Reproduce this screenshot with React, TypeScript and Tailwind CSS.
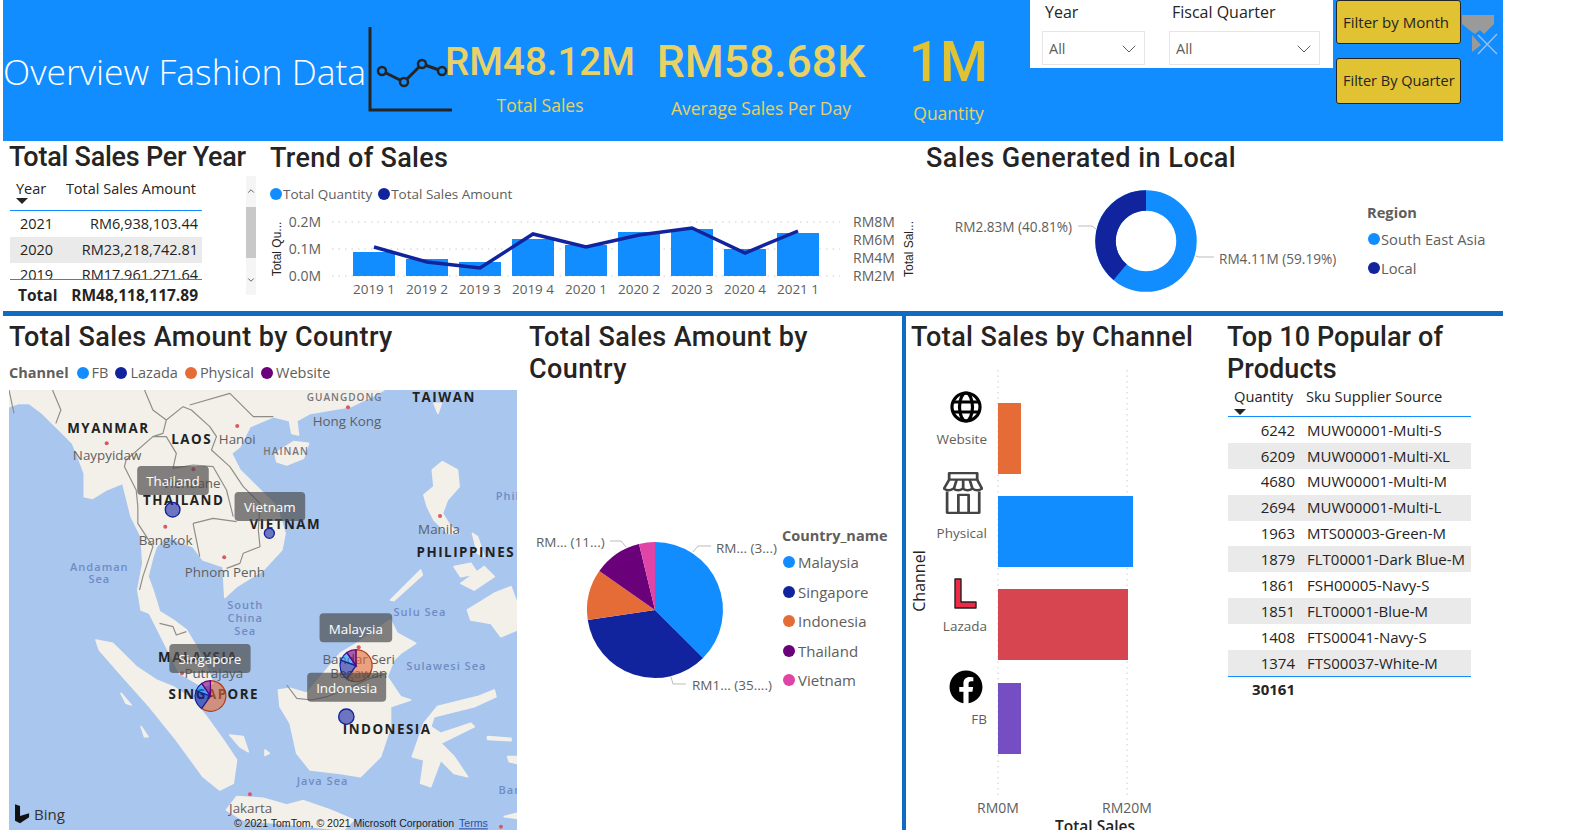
import { ChevronDown, ChevronUp } from 'lucide-react';
import { FaFacebook } from 'react-icons/fa';

const BLUE = '#118DFF';
const NAVY = '#12239E';
const ORANGE = '#E66C37';
const PURPLE = '#6B007B';
const PINK = '#E044A7';

const trendBars = [252, 259, 262, 239, 245, 232, 229, 249, 233];
const trendLine = [247, 262, 268, 234, 247, 235, 228, 253, 231];
const trendLabels = ['2019 1', '2019 2', '2019 3', '2019 4', '2020 1', '2020 2', '2020 3', '2020 4', '2021 1'];

const yearRows = [
  { year: '2021', amount: 'RM6,938,103.44' },
  { year: '2020', amount: 'RM23,218,742.81' },
  { year: '2019', amount: 'RM17,961,271.64' },
];

const productRows = [
  { qty: 6242, sku: 'MUW00001-Multi-S' },
  { qty: 6209, sku: 'MUW00001-Multi-XL' },
  { qty: 4680, sku: 'MUW00001-Multi-M' },
  { qty: 2694, sku: 'MUW00001-Multi-L' },
  { qty: 1963, sku: 'MTS00003-Green-M' },
  { qty: 1879, sku: 'FLT00001-Dark Blue-M' },
  { qty: 1861, sku: 'FSH00005-Navy-S' },
  { qty: 1851, sku: 'FLT00001-Blue-M' },
  { qty: 1408, sku: 'FTS00041-Navy-S' },
  { qty: 1374, sku: 'FTS00037-White-M' },
];

const countryLegend = [
  { name: 'Malaysia', color: BLUE },
  { name: 'Singapore', color: NAVY },
  { name: 'Indonesia', color: ORANGE },
  { name: 'Thailand', color: PURPLE },
  { name: 'Vietnam', color: PINK },
];

// map shapes are traced in 3x crop coordinates, the svg viewBox scales them back down
const land = [
  '0,0 1120,0 1100,12 1020,50 900,70 860,92 865,135 845,130 838,92 790,80 720,110 690,170 665,190 690,240 740,290 800,350 825,430 815,480 760,540 680,590 645,622 640,530 580,510 550,470 470,440 440,470 430,500 415,560 430,600 450,665 490,690 530,720 560,770 590,830 610,880 580,890 510,850 480,790 450,730 420,670 395,660 385,600 400,520 395,440 365,380 350,320 340,280 290,300 250,325 225,320 225,250 210,210 190,160 150,120 130,100 100,70 60,40 30,40 0,50',
  '260,750 310,760 380,830 440,870 490,890 550,930 590,980 640,1050 680,1110 670,1180 630,1200 580,1160 500,1050 420,950 340,860 270,780',
  '680,1220 760,1225 830,1245 880,1232 960,1260 1030,1290 1000,1320 700,1290 650,1260',
  '805,900 840,895 890,910 940,850 990,790 1040,760 1110,710 1140,690 1160,730 1215,760 1170,790 1150,810 1130,860 1170,920 1200,930 1140,950 1140,1010 1110,1100 1050,1160 990,1150 900,1140 860,1090 840,1000 810,950',
  '1205,1100 1240,1000 1280,950 1400,920 1450,900 1455,920 1390,950 1270,980 1260,1010 1290,1030 1380,1000 1390,1010 1290,1060 1330,1100 1370,1160 1330,1150 1290,1110 1260,1190 1230,1180 1240,1110',
  '1265,240 1295,215 1340,240 1345,290 1310,330 1295,370 1320,410 1345,430 1310,430 1270,390 1250,350 1240,315 1270,290',
  '1370,660 1450,610 1500,590 1518,640 1518,720 1470,740 1440,700 1380,690',
  '1330,530 1380,520 1400,550 1350,560',
  '1350,580 1420,530 1450,560 1390,600',
  '1385,430 1400,440 1420,500 1400,490',
  '1140,630 1230,540 1235,555 1150,632',
  '795,190 850,155 895,160 880,205 830,225 800,215',
  '1270,40 1292,40 1282,70',
  '660,1035 700,1040 715,1085 690,1070',
  '765,1080 778,1090 765,1096',
  '335,910 365,945 350,940',
  '395,1010 415,1040 405,1040',
  '1430,1040 1500,1045 1500,1052 1430,1048',
  '1490,1100 1518,1100 1518,1120 1495,1115',
  '1480,1280 1518,1270 1518,1285',
];

const borders = [
  '0,0 15,70',
  '130,0 155,60 140,100',
  '405,0 430,60 470,90 460,130 430,140 350,210 345,230 380,300 385,350 385,400 430,470 400,560 390,600',
  '470,90 520,50 545,60 600,110 620,140 605,180 660,230 700,290 750,340 745,420 750,470 700,490 690,520 650,535',
  '540,45 660,10 730,80 790,80',
  '430,140 470,140 500,190 490,235 550,225 610,230 650,300 670,380',
  '550,400 610,385 680,395',
  '550,400 570,500',
  '450,700 490,710 500,735 530,725',
  '830,885 860,925 905,930 950,920 1000,900 1080,865 1130,850',
];

const mapText = [
  { t: 'TAIWAN', x: 1300, y: 22, k: 'c' },
  { t: 'MYANMAR', x: 297, y: 115, k: 'c' },
  { t: 'LAOS', x: 546, y: 150, k: 'c' },
  { t: 'THAILAND', x: 522, y: 333, k: 'c' },
  { t: 'VIETNAM', x: 826, y: 403, k: 'c' },
  { t: 'PHILIPPINES', x: 1365, y: 487, k: 'c' },
  { t: 'MALAYSIA', x: 565, y: 803, k: 'c' },
  { t: 'SINGAPORE', x: 612, y: 915, k: 'c' },
  { t: 'INDONESIA', x: 1130, y: 1020, k: 'c' },
  { t: 'GUANGDONG', x: 1003, y: 20, k: 'r' },
  { t: 'HAINAN', x: 828, y: 182, k: 'r' },
  { t: 'Hong Kong', x: 1010, y: 95, k: 'p' },
  { t: 'Hanoi', x: 682, y: 150, k: 'p' },
  { t: 'Naypyidaw', x: 293, y: 197, k: 'p' },
  { t: 'Vientiane', x: 545, y: 282, k: 'p' },
  { t: 'Bangkok', x: 468, y: 453, k: 'p' },
  { t: 'Phnom Penh', x: 645, y: 547, k: 'p' },
  { t: 'Manila', x: 1285, y: 418, k: 'p' },
  { t: 'Bandar Seri', x: 1045, y: 810, k: 'p' },
  { t: 'Begawan', x: 1045, y: 852, k: 'p' },
  { t: 'Putrajaya', x: 612, y: 850, k: 'p' },
  { t: 'Jakarta', x: 722, y: 1255, k: 'p' },
  { t: 'Andaman', x: 270, y: 530, k: 's' },
  { t: 'Sea', x: 270, y: 567, k: 's' },
  { t: 'South', x: 706, y: 645, k: 's' },
  { t: 'China', x: 706, y: 683, k: 's' },
  { t: 'Sea', x: 706, y: 722, k: 's' },
  { t: 'Sulu Sea', x: 1228, y: 665, k: 's' },
  { t: 'Sulawesi Sea', x: 1307, y: 828, k: 's' },
  { t: 'Java Sea', x: 937, y: 1172, k: 's' },
  { t: 'Phil', x: 1490, y: 318, k: 's' },
  { t: 'Bar', x: 1495, y: 1200, k: 's' },
];

const cityDots = [
  [1013, 52], [682, 108], [292, 160], [551, 238], [467, 410], [643, 502],
  [1288, 378], [1045, 772], [517, 850], [720, 1213], [1470, 1310],
];

const tips = [
  { t: 'Singapore', x: 479, y: 762, w: 243 },
  { t: 'Thailand', x: 383, y: 228, w: 214 },
  { t: 'Vietnam', x: 674, y: 306, w: 211 },
  { t: 'Malaysia', x: 928, y: 670, w: 217 },
  { t: 'Indonesia', x: 891, y: 848, w: 236 },
];

// pie slice between two clockwise angles measured from 12 o'clock
function slice(cx: number, cy: number, r: number, from: number, to: number) {
  const a = ((from - 90) * Math.PI) / 180;
  const b = ((to - 90) * Math.PI) / 180;
  const large = to - from > 180 ? 1 : 0;
  return `M${cx} ${cy}L${cx + r * Math.cos(a)} ${cy + r * Math.sin(a)}A${r} ${r} 0 ${large} 1 ${cx + r * Math.cos(b)} ${cy + r * Math.sin(b)}Z`;
}

function Dot({ color }: { color: string }) {
  return <span className="h-3 w-3 shrink-0 rounded-full" style={{ backgroundColor: color }} />;
}

function Title({ children, className = '' }: { children: React.ReactNode; className?: string }) {
  return (
    <h2 className={`font-['Roboto',sans-serif] text-[27px] leading-8 font-medium text-[#252423] ${className}`}>
      {children}
    </h2>
  );
}

function SortArrow() {
  return <span className="block h-0 w-0 border-x-[6px] border-t-[6px] border-x-transparent border-t-[#252423]" />;
}

function Slicer({ label, className }: { label: string; className: string }) {
  return (
    <div className={className}>
      <div className="h-[31px] pl-[3px] text-[16px] text-[#252423]">{label}</div>
      <div className="flex h-[34px] items-center justify-between border border-[#e6e6e6] pt-[2px] pl-[6px] pr-[3px] text-[14.5px] text-[#605E5C]">
        All
        <ChevronDown className="h-[24px] w-[24px] text-[#605E5C]" strokeWidth={1} />
      </div>
    </div>
  );
}

function Kpi({ value, label, className, valueClass, labelClass }: { value: string; label: string; className: string; valueClass: string; labelClass: string }) {
  return (
    <div className={`flex flex-col items-center ${className}`}>
      <div className={`font-['Roboto',sans-serif] font-medium whitespace-nowrap ${valueClass}`}>{value}</div>
      <div className={`text-[17.5px] whitespace-nowrap text-[#E8D166] ${labelClass}`}>{label}</div>
    </div>
  );
}

function Header() {
  return (
    <header className="flex h-[141px] w-[1500px] items-start bg-[#118DFF]">
      <div className="mt-[48px] w-[362px] text-[35.5px] leading-[46px] font-light whitespace-nowrap text-white">Overview Fashion Data</div>
      <svg viewBox="365 20 90 100" className="h-[100px] w-[90px] shrink-0 translate-y-[20px] overflow-visible" fill="none" stroke="#252423">
        <path d="M370 27V110H452" strokeWidth="3" />
        <path d="M382 71L404 82L422 64L442 71" strokeWidth="3" />
        <circle cx="382" cy="71" r="4" strokeWidth="2.5" fill={BLUE} />
        <circle cx="404" cy="82" r="4" strokeWidth="2.5" fill={BLUE} />
        <circle cx="422" cy="64" r="4" strokeWidth="2.5" fill={BLUE} />
        <circle cx="442" cy="71" r="4" strokeWidth="2.5" fill={BLUE} />
      </svg>
      <Kpi value="RM48.12M" label="Total Sales" className="ml-[-10px] mt-[38px] w-[190px]" valueClass="text-[38.5px] leading-[48px] text-[#E8D166]" labelClass="mt-[6px]" />
      <Kpi value="RM58.68K" label="Average Sales Per Day" className="ml-[20px] mt-[36px] w-[212px]" valueClass="text-[44.5px] leading-[52px] text-[#E8D166]" labelClass="mt-[7px]" />
      <Kpi value="1M" label="Quantity" className="ml-[44px] mt-[30px] w-[75px]" valueClass="text-[55px] leading-[64px] text-[#E0C232]" labelClass="mt-[6px]" />
      <div className="ml-[44px] flex h-[68px] w-[303px] gap-[24px] bg-white pl-[12px]">
        <Slicer label="Year" className="w-[103px]" />
        <Slicer label="Fiscal Quarter" className="w-[151px]" />
      </div>
      <div className="ml-[3px] flex w-[125px] flex-col gap-[14px]">
        <button className="h-[44px] rounded-[3px] border border-[#252423] bg-[#E0C232] pl-[6px] text-left text-[15px] text-[#252423]">Filter by Month</button>
        <button className="h-[46px] rounded-[3px] border border-[#252423] bg-[#E0C232] pl-[6px] text-left text-[14.5px] whitespace-nowrap text-[#252423]">Filter By Quarter</button>
      </div>
      <svg viewBox="0 0 38 41" className="ml-[1px] h-[41px] w-[38px] shrink-0 translate-y-[15px]" fill="none">
        <path d="M0 0H32V9L22 19L18 15L13 19L10 17L0 9Z" fill="#9a9a9a" />
        <path d="M10 20L19 30L10 37Z" fill="#9a9a9a" />
        <path d="M16 20L35 39M35 19L16 39" stroke="#9dbfe6" strokeWidth="1.4" />
      </svg>
    </header>
  );
}

function YearTable() {
  return (
    <section className="flex h-full w-[262px] shrink-0 flex-col pl-[6px]">
      <Title className="-mt-[1px] h-[36px] pt-[1px] tracking-[-0.25px] whitespace-nowrap">Total Sales Per Year</Title>
      <div className="flex">
        <div className="mt-[3px] w-[193px] shrink-0 pl-[1px] text-[14.5px] leading-[20px] text-[#252423]">
          <div className="relative flex h-[32px] justify-between border-b border-[#118DFF] px-[6px]">
            <span>Year</span>
            <span>Total Sales Amount</span>
            <span className="absolute top-[19px] left-[6px]"><SortArrow /></span>
          </div>
          <div className="flex h-[26px] items-center justify-between pr-[4px] pl-[10px]">
            <span>{yearRows[0].year}</span><span>{yearRows[0].amount}</span>
          </div>
          <div className="flex h-[26px] items-center justify-between bg-[#EAEAEA] pr-[4px] pl-[10px]">
            <span>{yearRows[1].year}</span><span>{yearRows[1].amount}</span>
          </div>
          <div className="flex h-[17px] items-start justify-between overflow-hidden border-b border-[#118DFF] pt-[2px] pr-[4px] pl-[10px]">
            <span>{yearRows[2].year}</span><span>{yearRows[2].amount}</span>
          </div>
          <div className="flex h-[30px] items-center justify-between pr-[4px] pl-[8px] text-[15.5px] font-bold">
            <span>Total</span>
            <span>RM48,118,117.89</span>
          </div>
        </div>
        <div className="relative ml-[44px] h-[119px] w-[10px] bg-[#f5f5f5]">
          <div className="mt-[31px] h-[51px] bg-[#c8c8c8]" />
          <ChevronUp className="absolute top-[10px] left-0 h-[10px] w-[10px] text-[#444]" />
          <ChevronDown className="absolute bottom-[10px] left-0 h-[10px] w-[10px] text-[#444]" />
        </div>
      </div>
    </section>
  );
}

function TrendChart() {
  return (
    <section className="h-full w-[650px] shrink-0 pl-[5px]">
      <Title className="-mt-[1px] h-[36px] pt-[2px] tracking-[0.3px]">Trend of Sales</Title>
      <div className="mt-[11px] flex h-[14px] items-center gap-[1px] text-[13.5px] whitespace-nowrap text-[#605E5C]">
        <Dot color={BLUE} /><span className="mr-[5px]">Total Quantity</span>
        <Dot color={NAVY} /><span>Total Sales Amount</span>
      </div>
      <svg viewBox="265 205 650 100" className="mt-[4px] -ml-[5px] h-[100px] w-[650px]">
        {[222, 249, 276].map((y) => (
          <line key={y} x1="332" x2="840" y1={y} y2={y} stroke="#ccc" strokeDasharray="1.5 5" />
        ))}
        {trendBars.map((top, i) => (
          <rect key={i} x={353 + i * 53} y={top} width="42" height={276 - top} fill={BLUE} />
        ))}
        <polyline points={trendLine.map((y, i) => `${374 + i * 53},${y}`).join(' ')} fill="none" stroke={NAVY} strokeWidth="3.5" />
        {['0.2M', '0.1M', '0.0M'].map((t, i) => (
          <text key={t} x="321" y={227 + i * 27} textAnchor="end" className="fill-[#605E5C] text-[14px]">{t}</text>
        ))}
        {['RM8M', 'RM6M', 'RM4M', 'RM2M'].map((t, i) => (
          <text key={t} x="853" y={227 + i * 18} className="fill-[#605E5C] text-[14px]">{t}</text>
        ))}
        {trendLabels.map((t, i) => (
          <text key={t} x={374 + i * 53} y="294" textAnchor="middle" className="fill-[#605E5C] text-[13.5px]">{t}</text>
        ))}
        <text transform="translate(281 249) rotate(-90)" textAnchor="middle" className="fill-[#252423] font-['Liberation_Sans',sans-serif] text-[12px]">Total Qu...</text>
        <text transform="translate(913 249) rotate(-90)" textAnchor="middle" className="fill-[#252423] font-['Liberation_Sans',sans-serif] text-[12px]">Total Sal...</text>
      </svg>
    </section>
  );
}

function LocalDonut() {
  const cx = 1146;
  const cy = 240;
  return (
    <section className="flex h-full flex-1">
      <div className="w-[450px] shrink-0">
        <Title className="-mt-[1px] h-[36px] pl-[11px] pt-[2px] tracking-[0.5px]">Sales Generated in Local</Title>
        <svg viewBox="915 177 450 133" className="mt-[2px] h-[133px] w-[450px]">
          <circle cx={cx} cy={cy} r="40.5" fill="none" stroke={BLUE} strokeWidth="20.5" />
          <path d={`M${cx} ${cy - 40.5}A40.5 40.5 0 0 0 ${cx - 25.9} ${cy + 31.1}`} fill="none" stroke={NAVY} strokeWidth="20.5" />
          <path d="M1078 225H1092L1096 228" fill="none" stroke="#bbb" />
          <path d="M1196 255L1198 256H1214" fill="none" stroke="#bbb" />
          <text x="1072" y="231" textAnchor="end" className="fill-[#605E5C] text-[13.6px]">RM2.83M (40.81%)</text>
          <text x="1219" y="263" className="fill-[#605E5C] text-[13.6px]">RM4.11M (59.19%)</text>
        </svg>
      </div>
      <div className="pl-[2px] pt-[60px] text-[14.7px] text-[#605E5C]">
        <div className="font-bold">Region</div>
        <div className="mt-[5px] flex items-center gap-[1px] pl-[1px] whitespace-nowrap"><Dot color={BLUE} />South East Asia</div>
        <div className="mt-[7px] flex items-center gap-[1px] pl-[1px]"><Dot color={NAVY} />Local</div>
      </div>
    </section>
  );
}

function MapBubble({ cx, cy, r }: { cx: number; cy: number; r: number }) {
  return <circle cx={cx} cy={cy} r={r} fill="#12239E" fillOpacity="0.6" stroke="#12239E" strokeWidth="4" />;
}

function MapPie({ cx, cy, r }: { cx: number; cy: number; r: number }) {
  return (
    <g strokeWidth="3.5">
      <path d={slice(cx, cy, r, 0, 215)} fill={ORANGE} fillOpacity="0.6" stroke="#b5390c" />
      <path d={slice(cx, cy, r, 215, 290)} fill={NAVY} fillOpacity="0.6" stroke={NAVY} />
      <path d={slice(cx, cy, r, 290, 325)} fill={BLUE} fillOpacity="0.6" stroke={NAVY} />
      <path d={slice(cx, cy, r, 325, 360)} fill={PURPLE} fillOpacity="0.6" stroke={PURPLE} />
    </g>
  );
}

function SalesMap() {
  return (
    <svg viewBox="0 0 1518 1320" preserveAspectRatio="none" className="mt-[7px] ml-[6px] h-[440px] w-[508px] bg-[#A9C6EF]">
      <g className="blur-[0.4px]">
        {land.map((points) => <polygon key={points} points={points} fill="#F3F0EA" stroke="#F3F0EA" strokeWidth="5" strokeLinejoin="round" />)}
        {borders.map((points) => <polyline key={points} points={points} fill="none" stroke="#8f8d88" strokeWidth="3.5" strokeLinejoin="round" />)}
      </g>
      {cityDots.map(([x, y]) => <circle key={`${x}-${y}`} cx={x} cy={y} r="6" fill="#d9595f" />)}
      {mapText.map((m) => (
        <text
          key={`${m.t}-${m.x}`}
          x={m.x}
          y={m.y + 13}
          textAnchor="middle"
          className={
            m.k === 'c' ? 'fill-[#222] text-[40px] font-bold tracking-[4.5px]'
              : m.k === 'r' ? 'fill-[#77767a] text-[30px] font-semibold tracking-[3px]'
                : m.k === 's' ? 'fill-[#6f8cc4] text-[33px] font-semibold tracking-[3px]'
                  : 'fill-[#5f5f5f] text-[40px]'
          }
        >
          {m.t}
        </text>
      ))}
      <MapBubble cx={489} cy={359} r={22} />
      <MapBubble cx={778} cy={430} r={15} />
      <MapBubble cx={1008} cy={980} r={23} />
      <MapPie cx={602} cy={918} r={46} />
      <MapPie cx={1037} cy={827} r={48} />
      {tips.map((tip) => (
        <g key={tip.t}>
          <rect x={tip.x} y={tip.y} width={tip.w} height="87" rx="12" fill="#4a4a4a" fillOpacity="0.68" />
          <text x={tip.x + tip.w / 2} y={tip.y + 61} textAnchor="middle" className="fill-white text-[40px]">{tip.t}</text>
        </g>
      ))}
      <path d="M18 1243L33 1248V1278L60 1270V1282L33 1300L18 1292Z" fill="#111" />
      <text x="75" y="1290" className="fill-[#333] text-[45px]">Bing</text>
      <text x="672" y="1312" className="fill-[#222] font-['Liberation_Sans',sans-serif] text-[31.5px]">© 2021 TomTom, © 2021 Microsoft Corporation</text>
      <text x="1345" y="1312" className="fill-[#2b4fa8] font-['Liberation_Sans',sans-serif] text-[31.5px]" textDecoration="underline">Terms</text>
    </svg>
  );
}

function CountryPie() {
  const cx = 655;
  const cy = 610;
  const r = 68;
  const stops = [0, 135, 261.5, 305, 346.4, 360];
  return (
    <section className="h-full w-[382px] shrink-0">
      <Title className="w-[340px] pl-[9px] pt-[5px] tracking-[0.4px]">Total Sales Amount by Country</Title>
      <div className="mt-[5px] flex">
        <svg viewBox="520 390 262 440" className="h-[440px] w-[262px] shrink-0">
          {countryLegend.map((c, i) => (
            <path key={c.name} d={slice(cx, cy, r, stops[i], stops[i + 1])} fill={c.color} />
          ))}
          <path d="M610 541H621L626 547" fill="none" stroke="#bbb" />
          <path d="M693 552L698 546H711" fill="none" stroke="#bbb" />
          <path d="M671 677L673 684H686" fill="none" stroke="#bbb" />
          <text x="536" y="547" className="fill-[#605E5C] text-[13.5px]">RM... (11...)</text>
          <text x="716" y="553" className="fill-[#605E5C] text-[13.5px]">RM... (3...)</text>
          <text x="692" y="690" className="fill-[#605E5C] text-[13.5px]">RM1... (35....)</text>
        </svg>
        <div className="pt-[136px] text-[15px] leading-[20px] text-[#605E5C]">
          <div className="text-[14.5px] font-bold whitespace-nowrap">Country_name</div>
          <div className="mt-[6px] flex flex-col gap-[9.6px]">
            {countryLegend.map((c) => (
              <div key={c.name} className="flex items-center gap-[3px] pl-[1px]"><Dot color={c.color} />{c.name}</div>
            ))}
          </div>
        </div>
      </div>
    </section>
  );
}

function ChannelIcon({ label, icon, className, iconClass, labelClass }: { label: string; icon: React.ReactNode; className: string; iconClass: string; labelClass: string }) {
  return (
    <div className={`flex flex-col ${className}`}>
      <div className={`flex w-[50px] items-center justify-center ${iconClass}`}>{icon}</div>
      <div className={`-ml-[20px] w-[66px] text-right text-[13.5px] leading-[18px] text-[#605E5C] ${labelClass}`}>{label}</div>
    </div>
  );
}

function ChannelChart() {
  const bars = [
    { y: 403, to: 1021, color: ORANGE },
    { y: 496, to: 1133, color: BLUE },
    { y: 589, to: 1128, color: '#D64550' },
    { y: 683, to: 1021, color: '#744EC2' },
  ];
  return (
    <section className="h-full w-[322px] shrink-0 overflow-hidden">
      <Title className="pl-[5px] pt-[5px] tracking-[0.4px] whitespace-nowrap">Total Sales by Channel</Title>
      <div className="relative flex h-[477px]">
        <div className="flex w-[26px] items-center justify-center pb-[22px]">
          <span className="-rotate-90 text-[16px] font-medium whitespace-nowrap text-[#252423]">Channel</span>
        </div>
        <div className="ml-[9px] flex flex-col pt-[32px]">
          <ChannelIcon
            label="Website"
            className=""
            iconClass="h-[44px]"
            labelClass="mt-[1px]"
            icon={
              <svg viewBox="0 0 32 32" className="h-[32px] w-[32px]" fill="none" stroke="#000" strokeWidth="3.2">
                <circle cx="16" cy="16" r="14" />
                <ellipse cx="16" cy="16" rx="6.5" ry="14" />
                <path d="M3 11H29M3 21H29" />
              </svg>
            }
          />
          <ChannelIcon
            label="Physical"
            className="mt-[24px]"
            iconClass="h-[42px] -translate-x-[3px]"
            labelClass="mt-[10px]"
            icon={
              <svg viewBox="0 0 117 147" preserveAspectRatio="none" className="h-[42px] w-[40px]" fill="none" stroke="#444" strokeWidth="8" strokeLinejoin="round">
                <path d="M18 27V4H100V27" />
                <path d="M18 27H100L114 58Q100 70 86 58Q72 70 58 58Q44 70 30 58Q16 70 3 58Z" />
                <path d="M40 27L32 58M59 27V58M78 27L86 58" />
                <path d="M12 68V143H106V68" />
                <path d="M45 143V80H75V143" />
              </svg>
            }
          />
          <ChannelIcon
            label="Lazada"
            className="mt-[31px]"
            iconClass="h-[40px] -translate-x-[1px]"
            labelClass="mt-[4px]"
            icon={
              <svg viewBox="0 0 25 34" className="h-[34px] w-[25px]">
                <path d="M2 3H8V26H23V32H2Z" fill="#EE2B47" stroke="#222" strokeWidth="1.4" strokeLinejoin="round" />
              </svg>
            }
          />
          <ChannelIcon label="FB" className="mt-[32px]" iconClass="h-[40px]" labelClass="mt-[3px]" icon={<FaFacebook className="h-[34px] w-[34px] text-black" />} />
        </div>
        <svg viewBox="960 370 256 477" className="absolute top-[17px] left-[54px] h-[477px] w-[256px]">
          <line x1="998" x2="998" y1="370" y2="796" stroke="#ccc" strokeDasharray="1.5 4" />
          <line x1="1127" x2="1127" y1="370" y2="796" stroke="#ccc" strokeDasharray="1.5 4" />
          {bars.map((b) => <rect key={b.y} x="998" y={b.y} width={b.to - 998} height="71" fill={b.color} />)}
          <text x="998" y="813" textAnchor="middle" className="fill-[#605E5C] text-[14px]">RM0M</text>
          <text x="1127" y="813" textAnchor="middle" className="fill-[#605E5C] text-[14px]">RM20M</text>
          <text x="1095" y="832" textAnchor="middle" className="fill-[#252423] text-[15.5px] font-semibold">Total Sales</text>
        </svg>
      </div>
    </section>
  );
}

function ProductTable() {
  return (
    <section className="h-full w-[243px] shrink-0">
      <Title className="-ml-[1px] pt-[5px] tracking-[0.1px] whitespace-nowrap">Top 10 Popular of<br />Products</Title>
      <div className="relative flex h-[32px] border-b border-[#118DFF] text-[14.7px] text-[#252423]">
        <span className="w-[78px] pl-[6px]">Quantity</span>
        <span>Sku Supplier Source</span>
        <span className="absolute top-[24px] left-[6px]"><SortArrow /></span>
      </div>
      {productRows.map((row, i) => (
        <div key={row.sku} className={`flex h-[25.9px] items-center text-[15px] text-[#252423] ${i % 2 === 1 ? 'bg-[#EAEAEA]' : ''}`}>
          <span className="w-[67px] text-right">{row.qty}</span>
          <span className="ml-[12px] whitespace-nowrap">{row.sku}</span>
        </div>
      ))}
      <div className="border-t border-[#118DFF] pt-[1px]">
        <div className="w-[67px] text-right text-[15px] leading-[22px] font-bold text-[#252423]">30161</div>
      </div>
    </section>
  );
}

export default function App() {
  return (
    <div className="h-[830px] w-[1585px] overflow-hidden bg-white pl-[3px] font-['Open_Sans',sans-serif]">
      <Header />
      <div className="flex h-[170px] w-[1500px]">
        <YearTable />
        <TrendChart />
        <LocalDonut />
      </div>
      <div className="h-[5px] w-[1500px] bg-[#0F6CC2]" />
      <div className="flex h-[514px] w-[1500px]">
        <section className="h-full w-[517px] shrink-0">
          <Title className="pl-[6px] pt-[5px] tracking-[0.4px] whitespace-nowrap">Total Sales Amount by Country</Title>
          <div className="mt-[10px] flex h-[20px] items-center pl-[6px] text-[14.5px] whitespace-nowrap text-[#605E5C]">
            <span className="mr-[8px] font-bold">Channel</span>
            <Dot color={BLUE} /><span className="ml-[3px] mr-[7px]">FB</span>
            <Dot color={NAVY} /><span className="ml-[3px] mr-[7px]">Lazada</span>
            <Dot color={ORANGE} /><span className="ml-[3px] mr-[7px]">Physical</span>
            <Dot color={PURPLE} /><span className="ml-[3px]">Website</span>
          </div>
          <SalesMap />
        </section>
        <CountryPie />
        <div className="h-full w-[4px] shrink-0 bg-[#0F6CC2]" />
        <ChannelChart />
        <ProductTable />
      </div>
    </div>
  );
}
